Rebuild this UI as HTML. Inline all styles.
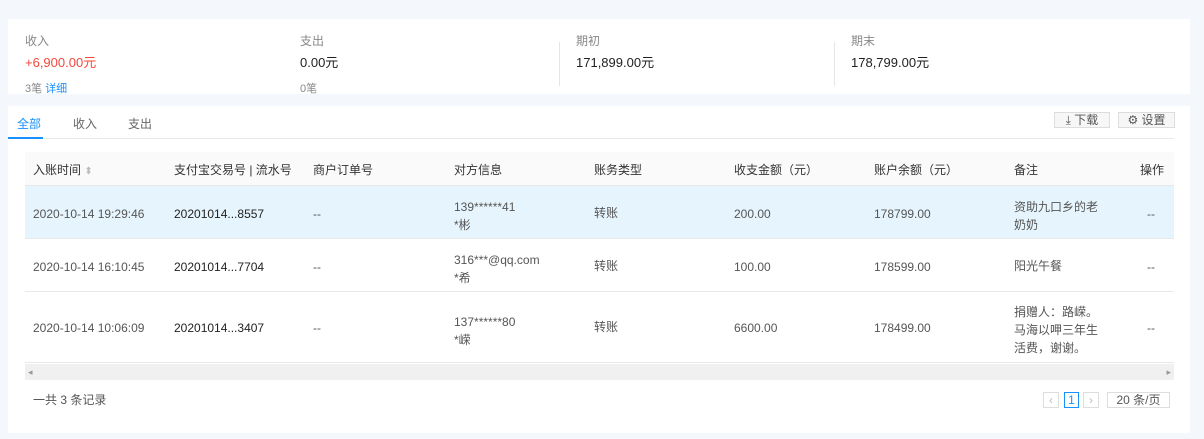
<!DOCTYPE html>
<html><head><meta charset="utf-8"><style>
*{margin:0;padding:0;box-sizing:border-box}
body{width:1204px;height:439px;background:#f4f7fb;font-family:"Liberation Sans","Noto Sans CJK SC",sans-serif;font-size:12px;color:#333;position:relative;overflow:hidden}
.a{position:absolute;line-height:14px}
.card1{left:8px;top:19px;width:1182px;height:75px;background:#fff;overflow:hidden}
.card2{left:8px;top:106px;width:1182px;height:327px;background:#fff}
.lbl{color:#888;font-size:12px}
.val{font-size:13px;color:#222}
.vl{width:1px;background:#e6e6e6}
.th{background:#fafafa;border-bottom:1px solid #e8e8e8}
.row{border-bottom:1px solid #e8e8e8}
.btn{border:1px solid #ddd;background:#f7f7f7;height:16px;font-size:12px;color:#555;line-height:14px;text-align:center}
</style></head><body>
<div class="a card1">
<div class="a lbl" style="left:17px;top:15px">收入</div>
<div class="a val" style="left:17px;top:37px;color:#f5483b">+6,900.00元</div>
<div class="a lbl" style="left:17px;top:63px;font-size:11px">3笔 <span style="color:#1890ff">详细</span></div>
<div class="a lbl" style="left:292px;top:15px">支出</div>
<div class="a val" style="left:292px;top:37px">0.00元</div>
<div class="a lbl" style="left:292px;top:63px;font-size:11px">0笔</div>
<div class="a vl" style="left:551px;top:23px;height:44px"></div>
<div class="a lbl" style="left:568px;top:15px">期初</div>
<div class="a val" style="left:568px;top:37px">171,899.00元</div>
<div class="a vl" style="left:826px;top:23px;height:44px"></div>
<div class="a lbl" style="left:843px;top:15px">期末</div>
<div class="a val" style="left:843px;top:37px">178,799.00元</div>
</div>
<div class="a card2">
<div class="a" style="left:0;top:32px;width:1166px;height:1px;background:#e8e8e8"></div>
<div class="a" style="left:9px;top:11px;color:#1890ff">全部</div>
<div class="a" style="left:0;top:31px;width:35px;height:2px;background:#1890ff"></div>
<div class="a" style="left:65px;top:11px;color:#666">收入</div>
<div class="a" style="left:120px;top:11px;color:#666">支出</div>
<div class="a btn" style="left:1046px;top:6px;width:56px">⤓ 下载</div>
<div class="a btn" style="left:1110px;top:6px;width:57px">⚙ 设置</div>
</div>
<div class="a th" style="left:25px;top:152px;width:1149px;height:34px"></div>
<div class="a row" style="left:25px;top:186px;width:1149px;height:53px;background:#e6f5fd"></div>
<div class="a row" style="left:25px;top:239px;width:1149px;height:53px"></div>
<div class="a row" style="left:25px;top:292px;width:1149px;height:71px"></div>
<div class="a" style="left:25px;top:364px;width:1149px;height:16px;background:#f0f0f0;color:#999;font-size:9px;line-height:16px;padding:0 3px">◂<span style="float:right">▸</span></div>
<div class="a" style="top:163px;left:0;width:1204px;color:#333">
<span class="a" style="left:33px">入账时间 <span style="color:#bbb;font-size:10px">⬍</span></span>
<span class="a" style="left:174px">支付宝交易号 | 流水号</span>
<span class="a" style="left:313px">商户订单号</span>
<span class="a" style="left:454px">对方信息</span>
<span class="a" style="left:594px">账务类型</span>
<span class="a" style="left:734px">收支金额（元）</span>
<span class="a" style="left:874px">账户余额（元）</span>
<span class="a" style="left:1014px">备注</span>
<span class="a" style="left:1140px">操作</span>
</div>
<div class="a" style="top:207px;left:0;width:1204px;color:#555">
<span class="a" style="left:33px">2020-10-14 19:29:46</span><span class="a" style="left:174px;color:#222">20201014...8557</span><span class="a" style="left:313px">--</span><span class="a" style="left:454px;top:-9px;line-height:18px">139******41<br>*彬</span><span class="a" style="left:594px;top:-1px">转账</span><span class="a" style="left:734px">200.00</span><span class="a" style="left:874px">178799.00</span><span class="a" style="left:1014px;top:-9px;line-height:18px">资助九口乡的老<br>奶奶</span><span class="a" style="left:1147px">--</span>
</div>
<div class="a" style="top:260px;left:0;width:1204px;color:#555">
<span class="a" style="left:33px">2020-10-14 16:10:45</span><span class="a" style="left:174px;color:#222">20201014...7704</span><span class="a" style="left:313px">--</span><span class="a" style="left:454px;top:-9px;line-height:18px">316***@qq.com<br>*希</span><span class="a" style="left:594px;top:-1px">转账</span><span class="a" style="left:734px">100.00</span><span class="a" style="left:874px">178599.00</span><span class="a" style="left:1014px;top:-1px">阳光午餐</span><span class="a" style="left:1147px">--</span>
</div>
<div class="a" style="top:321px;left:0;width:1204px;color:#555">
<span class="a" style="left:33px">2020-10-14 10:06:09</span><span class="a" style="left:174px;color:#222">20201014...3407</span><span class="a" style="left:313px">--</span><span class="a" style="left:454px;top:-8px;line-height:18px">137******80<br>*嵘</span><span class="a" style="left:594px;top:-1px">转账</span><span class="a" style="left:734px">6600.00</span><span class="a" style="left:874px">178499.00</span><span class="a" style="left:1014px;top:-18px;line-height:18px">捐赠人：路嵘。<br>马海以呷三年生<br>活费，谢谢。</span><span class="a" style="left:1147px">--</span>
</div>
<div class="a" style="left:33px;top:393px;color:#555">一共 3 条记录</div>
<div class="a btn" style="left:1043px;top:392px;width:16px;background:#fff;color:#bbb">‹</div>
<div class="a btn" style="left:1064px;top:392px;width:15px;background:#fff;border-color:#1890ff;color:#1890ff">1</div>
<div class="a btn" style="left:1083px;top:392px;width:16px;background:#fff;color:#bbb">›</div>
<div class="a btn" style="left:1107px;top:392px;width:63px;background:#fff">20 条/页</div>
</body></html>
